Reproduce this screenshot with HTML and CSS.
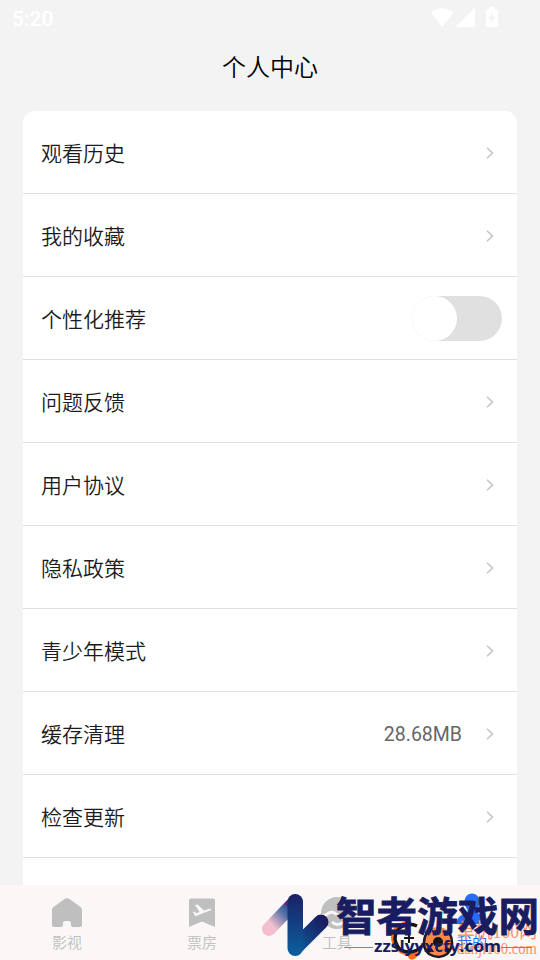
FILE: index.html
```html
<!DOCTYPE html>
<html lang="zh-CN">
<head>
<meta charset="utf-8">
<title>个人中心</title>
<link rel="stylesheet" href="styles.css">
</head>
<body>
<div class="screen">
  <header class="status">
    <span class="time">5:20</span>
    <svg class="status-icons" width="70" height="24" viewBox="0 0 70 24">
      <path d="M0 5.4Q11 -2.8 22.6 5.4L11.3 20Z"/>
      <path d="M24.5 20L44 .8V20Z"/>
      <path fill-rule="evenodd" d="M58 0h5v2h2.500q1.500 0 1.500 1.500v15q0 1.500-1.500 1.500h-9q-1.500 0-1.500-1.500v-15q0-1.500 1.500-1.500h1.500zM61.500 5l-4 7h2.500v5l4-7h-2.500z"/>
    </svg>
  </header>
  <h1 class="title">个人中心</h1>
  <main class="card">
    <div class="row"><span class="label">观看历史</span><svg class="arrow" viewBox="0 0 8 12"><path d="M1 .8L6.500 6L1 11.200"/></svg></div>
    <div class="row"><span class="label">我的收藏</span><svg class="arrow" viewBox="0 0 8 12"><path d="M1 .8L6.500 6L1 11.200"/></svg></div>
    <div class="row"><span class="label">个性化推荐</span><span class="switch"><span class="knob"></span></span></div>
    <div class="row"><span class="label">问题反馈</span><svg class="arrow" viewBox="0 0 8 12"><path d="M1 .8L6.500 6L1 11.200"/></svg></div>
    <div class="row"><span class="label">用户协议</span><svg class="arrow" viewBox="0 0 8 12"><path d="M1 .8L6.500 6L1 11.200"/></svg></div>
    <div class="row"><span class="label">隐私政策</span><svg class="arrow" viewBox="0 0 8 12"><path d="M1 .8L6.500 6L1 11.200"/></svg></div>
    <div class="row"><span class="label">青少年模式</span><svg class="arrow" viewBox="0 0 8 12"><path d="M1 .8L6.500 6L1 11.200"/></svg></div>
    <div class="row"><span class="label">缓存清理</span><span class="value">28.68MB</span><svg class="arrow" viewBox="0 0 8 12"><path d="M1 .8L6.500 6L1 11.200"/></svg></div>
    <div class="row"><span class="label">检查更新</span><svg class="arrow" viewBox="0 0 8 12"><path d="M1 .8L6.500 6L1 11.200"/></svg></div>
  </main>
  <nav class="tabs">
    <div class="tab">
      <svg class="tab-icon" viewBox="0 0 36 36"><path d="M15.500 4q2.500-1.700 5 0L31.500 12q1.500 1.200 1.500 3V30q0 2-2 2h-7q-2 0-2-2v-2q0-2-2-2h-4q-2 0-2 2v2q0 2-2 2H5q-2 0-2-2V15q0-1.800 1.500-3z"/></svg>
      <span>影视</span>
    </div>
    <div class="tab">
      <svg class="tab-icon" viewBox="0 0 36 36"><path d="M7 3.500h22q2 0 2 2V32L18 26.500L5 32V5.500q0-2 2-2z"/><path class="cut" d="M11 10l2.500-.5 6.500 6 5.500-1.800q2-.3 1.800 1.300l-16 6.300-2.300-4.300 1.500-.4 2 1.600 3-1.200z"/></svg>
      <span>票房</span>
    </div>
    <div class="tab">
      <svg class="tab-icon" viewBox="0 0 36 36"><circle cx="18" cy="18" r="16"/><path class="line" d="M1 21l6-1q5-5 10-1q6 4 9-1t8-4M13 27q5 5 12 0"/></svg>
      <span>工具</span>
    </div>
    <div class="tab active">
      <svg class="tab-icon" viewBox="0 0 36 36"><path d="M18 1.500a7.500 7.500 0 0 1 7.500 7.500c0 4-1 6-3 8.500v3q10 3 10.500 8.500v3H3v-3q.5-5.500 10.500-8.500v-3c-2-2.500-3-4.500-3-8.500A7.500 7.500 0 0 1 18 1.500z"/></svg>
      <span>我的</span>
    </div>
  </nav>
  <svg class="marks" width="290" height="76" viewBox="250 884 290 76">
    <defs>
      <linearGradient id="pink" x1="0" y1="1" x2="1" y2="0"><stop offset=".15" stop-color="#f3bfd0"/><stop offset=".65" stop-color="#526fa4"/><stop offset="1" stop-color="#174a86"/></linearGradient>
      <linearGradient id="blue" x1="0" y1="1" x2="0" y2="0"><stop offset="0" stop-color="#0b609e"/><stop offset="1" stop-color="#1b2164"/></linearGradient>
      <linearGradient id="navy" gradientUnits="userSpaceOnUse" x1="293" y1="948" x2="323" y2="921"><stop offset="0" stop-color="#0b609e"/><stop offset="1" stop-color="#1b1d60"/></linearGradient>
    </defs>
    <path fill="#ff6b1c" d="M412 921q-20 0-21 17q1 14 17 18q1 5 6 3q5-2 4-7q-19 2-22-12q-2-13 16-19z"/>
    <g fill="none" stroke="#171519">
      <path stroke-width="3.500" d="M417 926q-6-3-12-1q-10 4-10 14q2 13 14 13q8 0 13-6"/>
      <path stroke-width="2" d="M404 938h10M409 933v10"/>
    </g>
    <circle cx="438" cy="942" r="15" fill="#ff8849"/>
    <path fill="none" stroke="#211a20" stroke-width="2.500" d="M427 932q-7 14 2 22q10 6 18 0q9-9 2-22"/>
    <circle cx="438" cy="942" r="5" fill="#17151b"/>
    <circle cx="429" cy="950" r="2.500" fill="#17151b"/>
    <circle cx="447" cy="950" r="2.500" fill="#17151b"/>
    <text class="orange-name" x="457" y="938" textLength="80" lengthAdjust="spacingAndGlyphs">单机100网</text>
    <text class="orange-url" x="457" y="954" textLength="80" lengthAdjust="spacingAndGlyphs">danji100.com</text>
    <g fill="none" stroke-linecap="round" stroke-width="15">
      <path stroke="url(#pink)" stroke-width="14" d="M269 929L292 905"/>
      <path fill="#89128d" stroke="none" d="M284 904l5-5v9z"/>
      <path stroke="url(#navy)" d="M296 947L321 922"/>
    </g>
    <rect x="287.500" y="894" width="15.500" height="62" rx="7.700" fill="url(#blue)"/>
    <path d="M344 947.500h29M501 947.500h31" stroke="#5b91b5"/>
    <text class="brand" x="336" y="931" textLength="203" lengthAdjust="spacingAndGlyphs">智者游戏网</text>
    <text class="brand-url" x="374" y="952" textLength="127" lengthAdjust="spacingAndGlyphs">zzslyyxcfy.com</text>
  </svg>
</div>
</body>
</html>
```
FILE: styles.css
```css
* { box-sizing: border-box; }
body { margin: 0; background: #f3f3f3; font-family: Roboto, "Noto Sans CJK SC", sans-serif; }
.screen { position: relative; width: 540px; height: 960px; overflow: hidden; display: flex; flex-direction: column; }
.status { flex: none; height: 36px; padding: 7px 40px 0 12px; display: flex; justify-content: space-between; color: #fff; }
.time { font-size: 21px; line-height: 24px; font-weight: 500; }
.status-icons { fill: #fff; margin-right: -1px; }
.title { flex: none; height: 75px; margin: 0; text-align: center; font-size: 24px; line-height: 59px; font-weight: 350; font-family: "Noto Sans CJK SC DemiLight", "Noto Sans CJK SC", sans-serif; color: #000; }
.card { flex: 1; min-height: 0; margin: 0 23px; background: #fff; border-radius: 12px 12px 0 0; overflow: hidden; }
.row { height: 83px; padding: 0 15px 0 18px; border-bottom: 1px solid #e0e0e0; display: flex; align-items: center; }
.label { flex: 1; font-size: 21px; line-height: 30px; font-weight: 350; font-family: "Noto Sans CJK SC DemiLight", "Noto Sans CJK SC", sans-serif; color: #1c1c1c; padding-bottom: 1px; }
.arrow { width: 8px; height: 12px; margin: 1px 8px 0 0; fill: none; stroke: #c4c4c4; stroke-width: 1.500; }
.value { font-size: 19.500px; line-height: 24px; color: #666; margin: 3px 24px 0 0; }
.switch { width: 90px; height: 45px; border-radius: 23px; background: #e0e0e0; }
.knob { display: block; width: 45px; height: 45px; border-radius: 50%; background: #fff; }
.tabs { flex: none; height: 75px; background: #faf7f6; display: flex; }
.tab { flex: 1; display: flex; flex-direction: column; align-items: center; padding: 10px 1px 0 0; color: #bfbfbf; font-size: 15px; line-height: 22px; font-weight: 350; font-family: "Noto Sans CJK SC DemiLight", "Noto Sans CJK SC", sans-serif; }
.tab-icon { width: 36px; height: 36px; fill: #bfbfbf; }
.cut { fill: #faf7f6; }
.line { fill: none; stroke: #faf7f6; stroke-width: 3; }
.active { color: #286afa; }
.active .tab-icon { fill: #286afa; margin-top: -3px; margin-bottom: 3px; }
.marks { position: absolute; left: 250px; top: 884px; }
.brand { font: 700 40px "Noto Sans CJK SC", sans-serif; fill: #191c61; stroke: #191c61; stroke-width: .8; }
.brand-url { font: 700 16px "Open Sans", sans-serif; fill: #191c61; }
.orange-name { font: 20px "Liberation Serif", "Noto Sans CJK SC", serif; fill: #ff9264; }
.orange-url { font: 16px "Liberation Serif", serif; fill: #ff9264; }
```
